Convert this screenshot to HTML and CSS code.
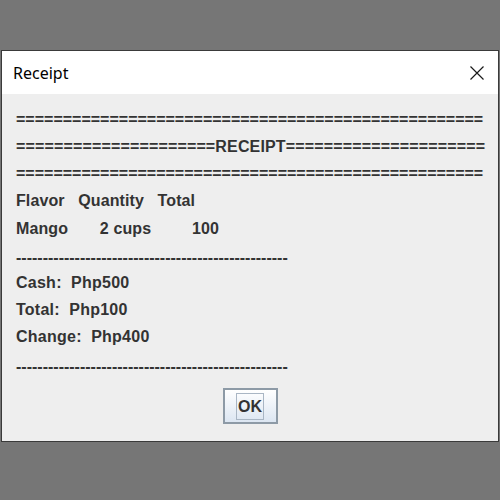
FILE: index.html
```html
<!DOCTYPE html>
<html>
<head>
<meta charset="utf-8">
<link rel="stylesheet" href="styles.css">
</head>
<body>
<div class="dialog">
  <div class="titlebar">
    <span class="title">Receipt</span>
    <svg class="close" width="16" height="16" viewBox="0 0 16 16"><path d="M1.5 1.5 L14.5 14.5 M14.5 1.5 L1.5 14.5" stroke="#1a1a1a" stroke-width="1.2" fill="none"/></svg>
  </div>
  <div class="content">
    <div class="lines">
      <div class="row">==================================================</div>
      <div class="row wide">=====================RECEIPT=====================</div>
      <div class="row">==================================================</div>
      <div class="row head">Flavor   Quantity   Total</div>
      <div class="row item">Mango       2 cups         100</div>
      <div class="row dash">---------------------------------------------------</div>
      <div class="row txt">Cash:  Php500</div>
      <div class="row txt">Total:  Php100</div>
      <div class="row txt">Change:  Php400</div>
      <div class="row dash">---------------------------------------------------</div>
    </div>
    <div class="actions">
      <button class="ok"><span class="focus">OK</span></button>
    </div>
  </div>
</div>
</body>
</html>
```
FILE: styles.css
```css
html, body {
  margin: 0;
  padding: 0;
  background: #767676;
  width: 500px;
  height: 500px;
  overflow: hidden;
}
body {
  padding-top: 50px;
  padding-left: 1px;
  box-sizing: border-box;
}
.dialog {
  width: 498px;
  height: 392px;
  box-sizing: border-box;
  border: 1px solid #3a3a3a;
  background: #eeeeee;
  display: flex;
  flex-direction: column;
}
.titlebar {
  height: 43px;
  background: #ffffff;
  display: flex;
  align-items: center;
  justify-content: space-between;
  padding: 0 13px 0 11px;
  flex-shrink: 0;
}
.title {
  font-family: "Noto Sans", "Open Sans", sans-serif;
  font-size: 16px;
  color: #000;
}
.close {
  display: block;
}
.content {
  flex: 1;
  padding: 12px 0 0 14px;
  display: flex;
  flex-direction: column;
}
.lines {
  display: flex;
  flex-direction: column;
}
.row {
  font-family: "Liberation Sans", Arial, sans-serif;
  font-weight: bold;
  font-size: 16px;
  line-height: 27px;
  height: 27px;
  color: #333333;
  white-space: pre;
  box-sizing: border-box;
}
.row.wide {
  letter-spacing: 0.15px;
}
.row.txt {
  letter-spacing: 0.25px;
}
.row.head {
  height: 28px;
  letter-spacing: 0.1px;
}
.row.item {
  height: 26px;
  letter-spacing: 0.1px;
}
.row.dash {
  padding-top: 3px;
  height: 28px;
}
.actions {
  display: flex;
  justify-content: center;
  padding-top: 10px;
  padding-right: 14px;
}
.ok {
  width: 55px;
  height: 36px;
  border: 2px solid #8d9aa6;
  background: linear-gradient(#ffffff, #dce6f2);
  padding: 0;
  margin: 0;
  display: flex;
  align-items: center;
  justify-content: center;
}
.focus {
  font-family: "Liberation Sans", Arial, sans-serif;
  font-weight: bold;
  font-size: 16px;
  color: #333333;
  border: 1px solid #a9b6c4;
  padding: 4px 1px;
  line-height: 17px;
}
```
